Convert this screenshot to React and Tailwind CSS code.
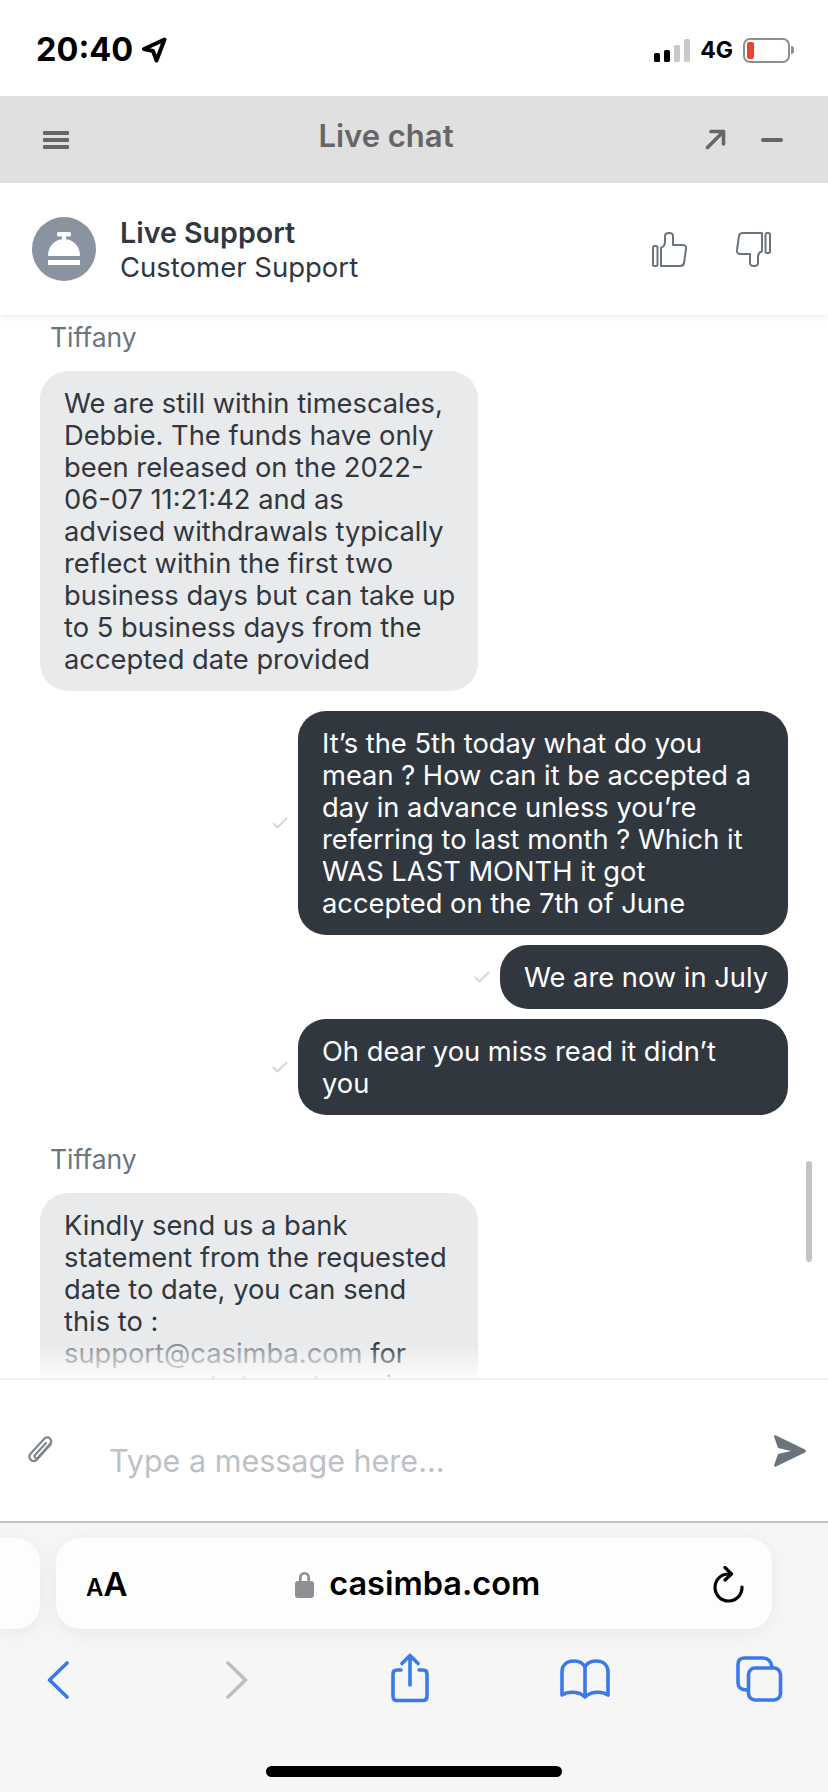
import React from "react";

const font = { fontFamily: "Inter, sans-serif" };

const ThumbUp = ({ flip }) => (
  <svg width="35" height="35" viewBox="0 0 35 35" fill="none" stroke="#6b747d" strokeWidth="2" strokeLinejoin="round">
    <g transform={flip ? "rotate(180 17.5 17.5)" : undefined}>
      <rect x="1" y="14" width="4.5" height="20" rx="1.5" />
      <path d="M9 34V16C11 15 13 13 13 10V4C13 2 15 1 17 1C19 1 21 2 21 4V13H31C33.5 13 34.5 15 34 17L32 31C31.7 33 30 34 28 34Z" />
    </g>
  </svg>
);

const Check = () => (
  <svg width="16" height="12" viewBox="0 0 16 12" fill="none" stroke="#d5d7d9" strokeWidth="2" strokeLinecap="round" strokeLinejoin="round">
    <path d="M1.5 6.5L5.5 10.5L14.5 1.5" />
  </svg>
);

const Incoming = ({ lines, fade }) => (
  <div className={fade ? "w-[438px] rounded-t-[28px] bg-[#e9eaec] px-6 pt-[17px] pb-[15px]" : "w-[438px] rounded-[28px] bg-[#e9eaec] px-6 pt-[17px] pb-[15px]"}>
    {lines.map((l, i) => (
      <div key={i} className="whitespace-nowrap">{l}</div>
    ))}
  </div>
);

const Outgoing = ({ lines, width }) => (
  <div className="flex items-center justify-end gap-[10px]">
    <Check />
    <div className={`${width} rounded-[28px] bg-[#30373f] px-6 pt-[17px] pb-[15px] text-white`}>
      {lines.map((l, i) => (
        <div key={i} className="whitespace-nowrap">{l}</div>
      ))}
    </div>
  </div>
);

export default function App() {
  return (
    <div style={font} className="flex h-[1792px] w-[828px] flex-col overflow-hidden bg-white text-[#30373f]">
      {/* status bar */}
      <div className="flex h-[96px] shrink-0 items-center justify-between pl-[36px] pr-[34px] pt-[4px]">
        <div className="flex items-center gap-[8px]">
          <span className="text-[32.5px] leading-none font-bold text-black">20:40</span>
          <svg width="26" height="26" viewBox="0 0 26 26" fill="none" stroke="#000" strokeWidth="4" strokeLinejoin="round">
            <path d="M23.5 2.5L3 12L12 14L15.5 23.5Z" />
          </svg>
        </div>
        <div className="flex items-center">
          <div className="flex items-end gap-[3.5px]">
            <div className="h-[9px] w-[6.5px] rounded-[1.5px] bg-black" />
            <div className="h-[12px] w-[6.5px] rounded-[1.5px] bg-black" />
            <div className="h-[17px] w-[6.5px] rounded-[1.5px] bg-[#c9c9c9]" />
            <div className="h-[23px] w-[6.5px] rounded-[1.5px] bg-[#c9c9c9]" />
          </div>
          <span className="ml-[10px] text-[23px] leading-none font-bold text-black">4G</span>
          <div className="ml-[10px] flex h-[25px] w-[47px] items-center rounded-[7px] border-2 border-[#8e8e8e] pl-[2px]">
            <div className="h-[17px] w-[7px] rounded-[2px] bg-[#ea4335]" />
          </div>
          <div className="ml-[1px] h-[8px] w-[3px] rounded-r-full bg-[#8e8e8e]" />
        </div>
      </div>

      {/* live chat header */}
      <div className="flex h-[87px] shrink-0 items-center justify-between bg-[#e0e0e0] pl-[43px] pr-[45px]">
        <svg width="26" height="18" viewBox="0 0 26 18" fill="#666">
          <rect y="0" width="26" height="4" rx="1" />
          <rect y="7" width="26" height="4" rx="1" />
          <rect y="14" width="26" height="4" rx="1" />
        </svg>
        <span className="mr-[2px] pb-[6px] text-[31px] font-semibold text-[#666]">Live chat</span>
        <div className="flex items-center gap-[35px]">
          <svg width="21" height="21" viewBox="0 0 21 21" fill="none" stroke="#666" strokeWidth="3.6" strokeLinecap="round" strokeLinejoin="round">
            <path d="M2.5 18.5L18.5 2.5M6 2.5H18.5V15" />
          </svg>
          <div className="h-[4px] w-[22px] rounded-full bg-[#666]" />
        </div>
      </div>

      {/* agent row */}
      <div className="relative z-10 flex h-[132px] shrink-0 items-center justify-between bg-white pl-[32px] pr-[57px] shadow-[0_2px_6px_rgba(0,0,0,0.08)]">
        <div className="flex items-center gap-[24px]">
          <div className="flex h-[64px] w-[64px] items-center justify-center rounded-full bg-[#8a93a0]">
            <svg width="32" height="34" viewBox="0 0 32 34" fill="#fff">
              <rect x="9" y="0" width="14" height="4.5" rx="1.5" />
              <rect x="14" y="4" width="4" height="4" />
              <path d="M0 24C0 13 8 7 16 7C24 7 32 13 32 24Z" />
              <rect x="0" y="28" width="32" height="5" />
            </svg>
          </div>
          <div className="pt-[2px] text-[27.5px] leading-[34px]">
            <div className="text-[28.6px] font-semibold">Live Support</div>
            <div>Customer Support</div>
          </div>
        </div>
        <div className="flex items-center gap-[49px]">
          <ThumbUp />
          <ThumbUp flip />
        </div>
      </div>

      {/* messages */}
      <div className="relative min-h-0 flex-1 overflow-hidden text-[27.3px] leading-[32px]">
        <div className="flex flex-col pl-[40px] pr-[40px] pt-[6px]">
          <div className="mb-[18px] ml-[10px] text-[26.5px] text-[#6b7580]">Tiffany</div>
          <Incoming
            lines={[
              "We are still within timescales,",
              "Debbie. The funds have only",
              "been released on the 2022-",
              "06-07 11:21:42 and as",
              "advised withdrawals typically",
              "reflect within the first two",
              "business days but can take up",
              "to 5 business days from the",
              "accepted date provided",
            ]}
          />
          <div className="mt-[20px] flex flex-col gap-[10px]">
            <Outgoing
              width="w-[490px]"
              lines={[
                "It’s the 5th today what do you",
                "mean ? How can it be accepted a",
                "day in advance unless you’re",
                "referring to last month ? Which it",
                "WAS LAST MONTH it got",
                "accepted on the 7th of June",
              ]}
            />
            <Outgoing width="w-[288px]" lines={["We are now in July"]} />
            <Outgoing width="w-[490px]" lines={["Oh dear you miss read it didn’t", "you"]} />
          </div>
          <div className="mt-[28px] mb-[18px] ml-[10px] text-[26.5px] text-[#6b7580]">Tiffany</div>
          <Incoming
            fade
            lines={[
              "Kindly send us a bank",
              "statement from the requested",
              "date to date, you can send",
              "this to :",
              <>
                <span className="text-[#868d94]">support@casimba.com</span> for
              </>,
              "our accounts team to review",
            ]}
          />
        </div>
        <div className="absolute right-[16px] top-[846px] h-[101px] w-[6px] rounded-full bg-[#c4c4c4]" />
        <div className="absolute inset-x-0 bottom-0 h-[34px] bg-gradient-to-b from-white/0 to-white/85" />
      </div>

      {/* message input */}
      <div className="flex h-[145px] shrink-0 items-center border-t-2 border-b-2 border-t-[#efefef] border-b-[#c4c4c4] bg-white pl-[26px] pr-[22px]">
        <svg width="28" height="30" viewBox="0 0 28 30" fill="none" stroke="#7e8790" strokeWidth="2.2" strokeLinecap="round" strokeLinejoin="round">
          <path d="M25 8L11 23.5C9 25.7 6 25.5 4.5 23.5C3 21.7 3 19.5 5 17.2L18 3C19.8 1 22.2 1 23.8 2.5C25.5 4.2 25.5 6.2 24 8L12 21.5C11 22.5 9.8 22.5 9 21.7C8.2 20.8 8.4 19.8 9.2 18.8L20 7" />
        </svg>
        <span className="ml-[55px] mt-[20px] flex-1 text-[30.5px] text-[#bdc1c5]">Type a message here...</span>
        <svg width="33" height="32" viewBox="0 0 33 32" fill="#6b747d">
          <path d="M1 1.5C1 0.5 2 0 3 0.5L32 14.5C33.2 15.2 33.2 16.8 32 17.5L3 31.5C2 32 1 31.5 1 30.5L5 19L18 16L5 13Z" />
        </svg>
      </div>

      {/* safari chrome */}
      <div className="flex h-[269px] shrink-0 flex-col bg-[#f6f6f7]">
        <div className="mt-[15px] flex h-[91px] shrink-0 gap-[16px]">
          <div className="w-[40px] rounded-r-[24px] bg-[#fdfdfd] shadow-[0_4px_20px_rgba(0,0,0,0.06)]" />
          <div className="flex w-[716px] items-center justify-between rounded-[24px] bg-[#fdfdfd] pl-[30px] pr-[28px] pt-[2px] shadow-[0_4px_20px_rgba(0,0,0,0.06)]">
            <div className="flex items-baseline font-semibold text-black">
              <span className="text-[24px] leading-none">A</span>
              <span className="text-[33px] leading-none">A</span>
            </div>
            <div className="mr-[5px] flex items-center gap-[15px]">
              <svg width="19" height="27" viewBox="0 0 19 27" fill="#8e8e93">
                <rect x="0" y="10" width="19" height="17" rx="3" />
                <path d="M4 11V6.5a5.5 5.5 0 0 1 11 0V11h-2.6V6.5a2.9 2.9 0 0 0-5.8 0V11Z" />
              </svg>
              <span className="text-[32.5px] leading-none font-semibold text-black">casimba.com</span>
            </div>
            <svg width="31" height="37" viewBox="0 0 31 37" fill="none" stroke="#000" strokeWidth="3.2" strokeLinecap="round" strokeLinejoin="round">
              <path d="M16 8A13.5 13.5 0 1 0 29 21" />
              <path d="M12 1.5L18.5 8L12 14" />
            </svg>
          </div>
        </div>
        <div className="flex h-[110px] shrink-0 items-start pt-[19px] pl-[47px]">
          <svg className="mt-[13px]" width="22" height="38" viewBox="0 0 22 38" fill="none" stroke="#3a7ae8" strokeWidth="3.6" strokeLinecap="round" strokeLinejoin="round">
            <path d="M20 2L2.5 19L20 36" />
          </svg>
          <svg className="ml-[157px] mt-[13px]" width="22" height="38" viewBox="0 0 22 38" fill="none" stroke="#bfbfc1" strokeWidth="3.6" strokeLinecap="round" strokeLinejoin="round">
            <path d="M2 2L19.5 19L2 36" />
          </svg>
          <svg className="ml-[143px] mt-[5px]" width="38" height="50" viewBox="0 0 38 50" fill="none" stroke="#3a7ae8" strokeWidth="3.6" strokeLinecap="round" strokeLinejoin="round">
            <path d="M10 17H6C3 17 2 18.5 2 21V43C2 46 3.5 47.5 6 47.5H32C34.5 47.5 36 46 36 43V21C36 18.5 35 17 32 17H28" />
            <path d="M19 32V2.5M11 10.5L19 2.5L27 10.5" />
          </svg>
          <svg className="ml-[131px] mt-[11px]" width="50" height="41" viewBox="0 0 50 41" fill="none" stroke="#3a7ae8" strokeWidth="3.6" strokeLinecap="round" strokeLinejoin="round">
            <path d="M25 8C23 4 19 2 14 2C7 2 2 6 2 13V36C8 32 19 32 25 38C31 32 42 32 48 36V13C48 6 43 2 36 2C31 2 27 4 25 8ZM25 8V38" />
          </svg>
          <svg className="ml-[126px] mt-[8px]" width="47" height="46" viewBox="0 0 47 46" fill="none" stroke="#3a7ae8" strokeWidth="3.6" strokeLinejoin="round">
            <path d="M11 34C5 34 2 31 2 27V9C2 4 4 2 9 2H27C32 2 35 5 36 11" />
            <rect x="12.5" y="12" width="32" height="32" rx="6.5" />
          </svg>
        </div>
        <div className="mx-auto mt-[27px] h-[11px] w-[296px] rounded-full bg-black" />
      </div>
    </div>
  );
}
